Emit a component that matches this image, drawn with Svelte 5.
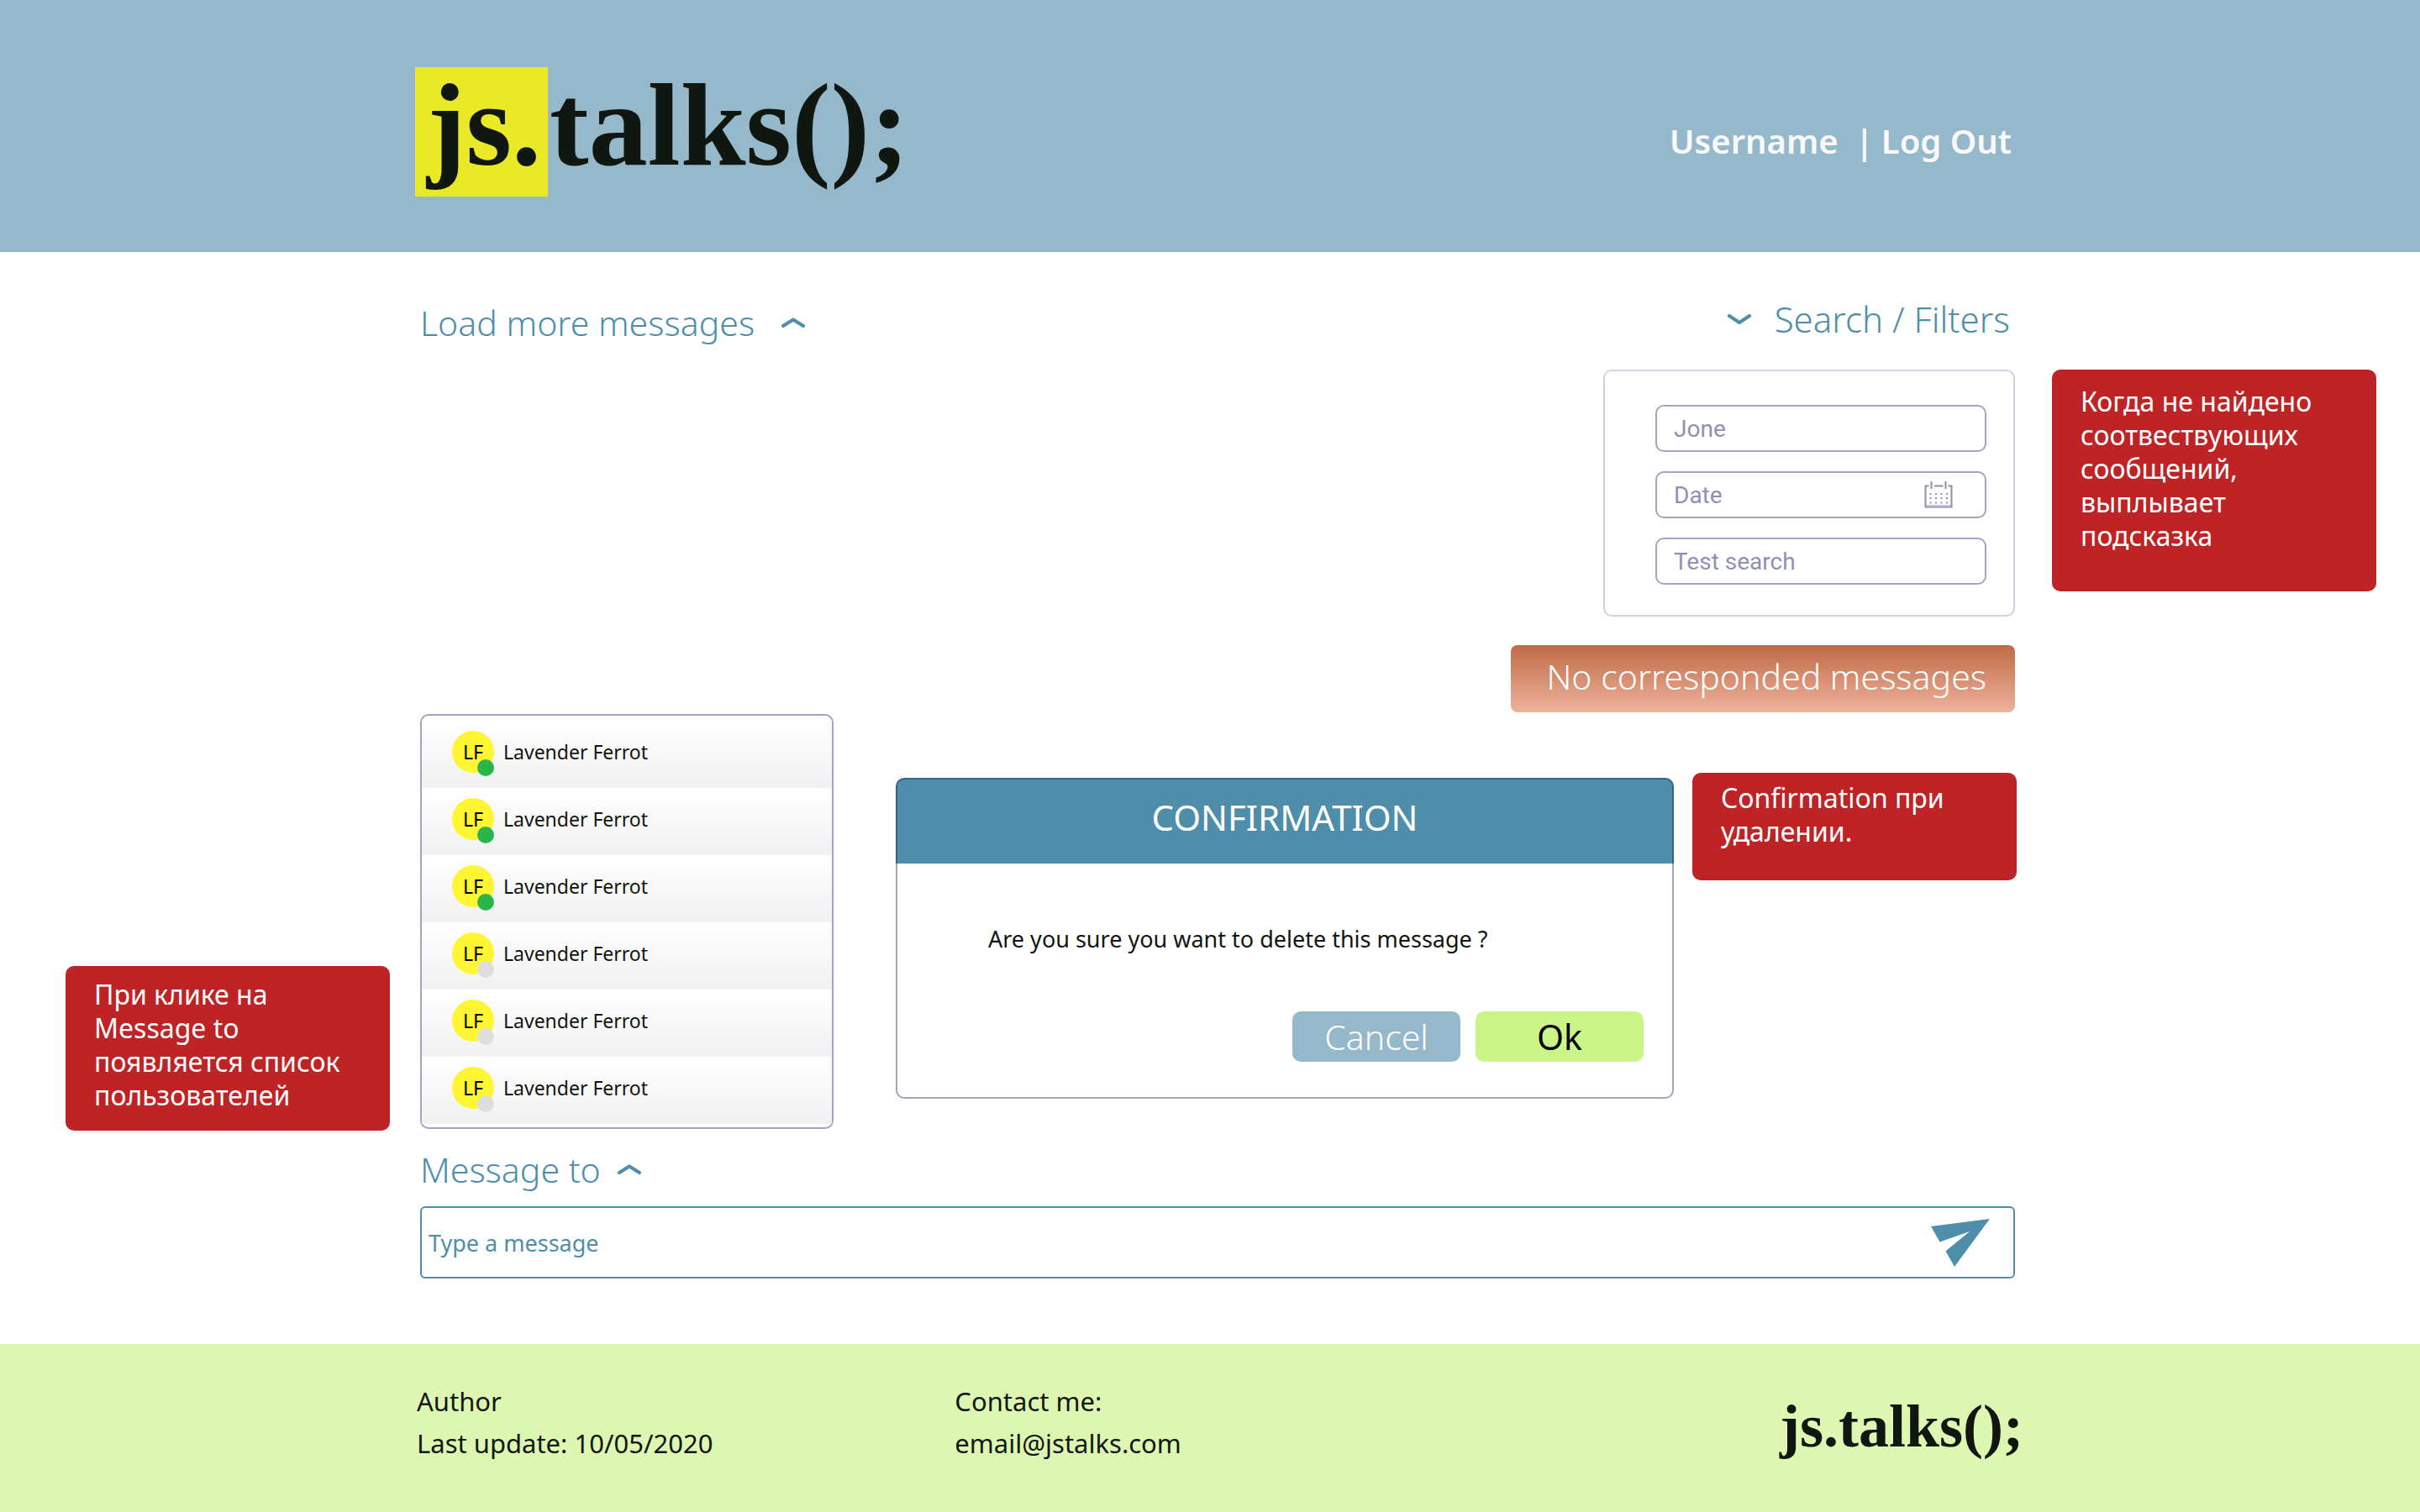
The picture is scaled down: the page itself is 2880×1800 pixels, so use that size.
<script>
  const users = [true, true, true, false, false, false].map((online) => ({
    name: 'Lavender Ferrot',
    initials: 'LF',
    online,
  }));

  let author = $state('');
  let date = $state('');
  let text = $state('');
  let message = $state('');
</script>

<header class="site-header frame">
  <div class="inner header-row">
    <a class="logo" href="#home"><span class="logo-mark">js.</span>talks();</a>
    <nav class="account">
      <a href="#profile">Username</a>
      <span class="divider">|</span>
      <a href="#logout">Log Out</a>
    </nav>
  </div>
</header>

<main class="frame">
  <section class="inner toolbar">
    <button class="toggle load" type="button">
      Load more messages
      <svg class="chevron" viewBox="0 0 28 12" aria-hidden="true"><path d="M2 10 14 2.5 26 10" /></svg>
    </button>
    <button class="toggle filter-toggle" type="button" aria-expanded="true">
      <svg class="chevron" viewBox="0 0 28 12" aria-hidden="true"><path d="M2 2 14 10 26 2" /></svg>
      Search / Filters
    </button>
  </section>

  <section class="inner search">
    <form class="filters">
      <input class="field" type="text" aria-label="Name" placeholder="Jone" bind:value={author} />
      <div class="date-field">
        <input class="field" type="text" aria-label="Date" placeholder="Date" bind:value={date} />
        <svg class="calendar" viewBox="0 0 34 32" aria-hidden="true">
          <path d="M5.5 5.5H1.5V30.5H32.5V5.5H28.5M12 5.5H22.5M8.500 0V9M25.5 0V9" />
          <path class="rule" d="M2 28.5H32" />
          {#each [14, 19, 24.5] as y}
            {#each [6.5, 13, 19.5, 26] as x}
              <rect {x} {y} width="2" height="2" />
            {/each}
          {/each}
        </svg>
      </div>
      <input class="field" type="text" aria-label="Text" placeholder="Test search" bind:value={text} />
    </form>
    <p class="toast" role="status">No corresponded messages</p>
  </section>
  <aside class="note note-search">Когда не найдено соотвествующих сообщений, выплывает подсказка</aside>

  <aside class="note note-users">При клике на Message to появляется список пользователей</aside>
  <section class="inner board">
    <ul class="users">
      {#each users as user}
        <li>
          <span class="avatar">
            {user.initials}
            <span class="status" class:online={user.online}></span>
          </span>
          <span>{user.name}</span>
        </li>
      {/each}
    </ul>

    <div class="dialog" role="dialog" aria-labelledby="dialog-title">
      <h2 id="dialog-title">CONFIRMATION</h2>
      <div class="dialog-body">
        <p>Are you sure you want to delete this message ?</p>
        <div class="actions">
          <button class="cancel" type="button">Cancel</button>
          <button class="ok" type="button">Ok</button>
        </div>
      </div>
    </div>

    <aside class="note note-dialog">Confirmation при удалении.</aside>
  </section>

  <section class="inner composer">
    <button class="toggle recipient" type="button" aria-expanded="true">
      Message to
      <svg class="chevron" viewBox="0 0 28 12" aria-hidden="true"><path d="M2 10 14 2.5 26 10" /></svg>
    </button>
    <form class="message-box">
      <input type="text" aria-label="Message" placeholder="Type a message" bind:value={message} />
      <button type="button" aria-label="Send">
        <svg class="send" viewBox="0 0 70 57" aria-hidden="true"><path d="M0 9 70 0 28 57 17.5 38.5 46 15 10.5 27.5Z" /></svg>
      </button>
    </form>
  </section>
</main>

<footer class="site-footer frame">
  <div class="inner footer-row">
    <p>Author<br />Last update: 10/05/2020</p>
    <p>Contact me:<br /><a href="mailto:email@jstalks.com">email@jstalks.com</a></p>
    <a class="logo small" href="#home">js.talks();</a>
  </div>
</footer>

<style>
  :global(body) {
    background: #fff;
    color: #101610;
    font-family: 'Noto Sans', 'Open Sans', sans-serif;
  }

  .frame {
    display: grid;
    grid-template-columns: minmax(0, 500fr) minmax(0, 1898fr) minmax(0, 482fr);
  }

  .inner {
    grid-column: 2;
  }

  a {
    color: inherit;
    text-decoration: none;
  }

  p,
  h2,
  ul {
    margin: 0;
    padding: 0;
  }

  button,
  input {
    margin: 0;
    border: 0;
    padding: 0;
    background: none;
    color: inherit;
    font: inherit;
  }

  button {
    cursor: pointer;
  }

  .site-header {
    background: #95b9ca;
    padding: 80px 0 66px;
  }

  .header-row {
    display: flex;
    justify-content: space-between;
    align-items: center;
  }

  .logo {
    display: flex;
    margin-left: -6px;
    color: #101610;
    font: 700 140px/138px 'Liberation Serif', serif;
  }

  .logo-mark {
    margin-right: 2px;
    padding: 0 8px 16px 14px;
    background: #e9e928;
  }

  .account {
    display: flex;
    margin-right: 4px;
    padding-top: 22px;
    color: #f9f9fb;
    font-size: 40px;
    font-weight: 600;
    line-height: 60px;
  }

  .divider {
    margin: 0 9px 0 20px;
  }

  .toolbar {
    display: flex;
    justify-content: space-between;
    align-items: flex-start;
    padding: 50px 6px 26px 0;
  }

  .toggle {
    display: flex;
    align-items: center;
    color: #4e8eaa;
    font-size: 41px;
    font-weight: 300;
    line-height: 60px;
  }

  .load {
    gap: 32px;
    padding-top: 4px;
  }

  .filter-toggle {
    gap: 28px;
    font-size: 42px;
  }

  .recipient {
    gap: 20px;
  }

  .chevron {
    width: 28px;
    height: 12px;
    fill: none;
    stroke: #4e8eaa;
    stroke-width: 4;
    stroke-linecap: round;
    stroke-linejoin: round;
  }

  .search {
    display: flex;
    flex-direction: column;
    align-items: flex-end;
    gap: 34px;
    padding-bottom: 2px;
  }

  .filters {
    display: grid;
    gap: 23px;
    box-sizing: border-box;
    width: 490px;
    padding: 40px 32px 36px 60px;
    border: 2px solid #d0d0e0;
    border-radius: 10px;
  }

  .field {
    box-sizing: border-box;
    width: 100%;
    height: 56px;
    padding: 0 20px;
    border: 2px solid #a3a4c0;
    border-radius: 10px;
    color: #8f90b4;
    font: 400 28px 'Roboto', sans-serif;
  }

  input::placeholder {
    color: inherit;
    opacity: 1;
  }

  .date-field {
    position: relative;
    display: flex;
  }

  .calendar {
    position: absolute;
    top: 12px;
    right: 40px;
    width: 34px;
    height: 32px;
    fill: #8f90b4;
  }

  .calendar path {
    fill: none;
    stroke: #8f90b4;
    stroke-width: 2;
  }

  .calendar .rule {
    stroke-width: 1;
    opacity: 0.5;
  }

  .toast {
    box-sizing: border-box;
    width: 600px;
    padding: 0 34px 6px;
    border-radius: 8px;
    background: linear-gradient(#bf6a45, #eeb39d);
    color: #fff;
    font-size: 41px;
    font-weight: 300;
    line-height: 74px;
    text-align: right;
  }

  .note {
    box-sizing: border-box;
    width: 386px;
    padding-left: 34px;
    padding-right: 34px;
    border-radius: 10px;
    background: #be2325;
    color: #fff;
    font-size: 32px;
    line-height: 40px;
  }

  .note-search {
    grid-column: 3;
    align-self: start;
    justify-self: center;
    margin-right: 8px;
    padding-top: 18px;
    padding-bottom: 46px;
  }

  .note-users {
    grid-column: 1;
    align-self: end;
    justify-self: end;
    margin-right: 36px;
    margin-bottom: -2px;
    padding-top: 14px;
    padding-bottom: 22px;
  }

  .note-dialog {
    flex: none;
    align-self: flex-start;
    margin: 70px -2px 0 22px;
    padding-top: 10px;
    padding-bottom: 38px;
  }

  .board {
    display: flex;
    align-items: flex-start;
  }

  .users {
    flex: none;
    box-sizing: border-box;
    width: 492px;
    padding: 6px 0 4px;
    border: 2px solid #a3a4c0;
    border-radius: 10px;
    list-style: none;
    font-size: 23px;
  }

  .users li {
    display: flex;
    align-items: center;
    gap: 11px;
    box-sizing: border-box;
    height: 80px;
    padding: 0 36px 6px;
    background: linear-gradient(#fff, #f1f1f1);
  }

  .avatar {
    position: relative;
    width: 50px;
    border-radius: 50%;
    background: #fff533;
    color: #000;
    line-height: 50px;
    text-align: center;
  }

  .status {
    position: absolute;
    right: 0;
    bottom: -4px;
    width: 20px;
    height: 20px;
    border-radius: 50%;
    background: #dedede;
  }

  .status.online {
    background: #2ab54a;
  }

  .dialog {
    flex: 1;
    margin: 76px 0 0 74px;
    border-radius: 10px;
  }

  .dialog h2 {
    padding: 8px 0 18px;
    border: 2px solid #36658c;
    border-bottom: 0;
    border-radius: 10px 10px 0 0;
    background: #4e8eaa;
    color: #fff;
    font-size: 42px;
    font-weight: 400;
    line-height: 74px;
    text-align: center;
  }

  .dialog-body {
    padding: 70px 34px 42px 108px;
    border: 2px solid #a3a4c0;
    border-top: 0;
    border-radius: 0 0 10px 10px;
  }

  .dialog-body p {
    font-size: 27px;
    line-height: 40px;
  }

  .actions {
    display: flex;
    justify-content: flex-end;
    gap: 18px;
    margin-top: 66px;
  }

  .actions button {
    width: 200px;
    border-radius: 10px;
    font-size: 41px;
    line-height: 60px;
  }

  .actions .cancel {
    background: #95b9ca;
    color: #fff;
    font-weight: 300;
  }

  .actions .ok {
    background: #cbf588;
    color: #000;
  }

  .composer {
    padding: 18px 0 78px;
  }

  .message-box {
    display: flex;
    align-items: center;
    box-sizing: border-box;
    height: 86px;
    margin-top: 14px;
    padding: 0 28px 0 8px;
    border: 2px solid #4e8eaa;
    border-radius: 6px;
    color: #4e8eaa;
  }

  .message-box input {
    flex: 1;
    height: 80px;
    font-size: 27px;
  }

  .send {
    display: block;
    width: 70px;
    height: 57px;
    fill: #4e8eaa;
  }

  .site-footer {
    background: #ddf6b1;
    padding: 43px 0 57px;
  }

  .footer-row {
    display: grid;
    grid-template-columns: 636fr 981fr auto;
    margin: 0 -10px 0 -4px;
    font-size: 31px;
    line-height: 50px;
  }

  .small {
    font-size: 72px;
    line-height: 110px;
  }
</style>
